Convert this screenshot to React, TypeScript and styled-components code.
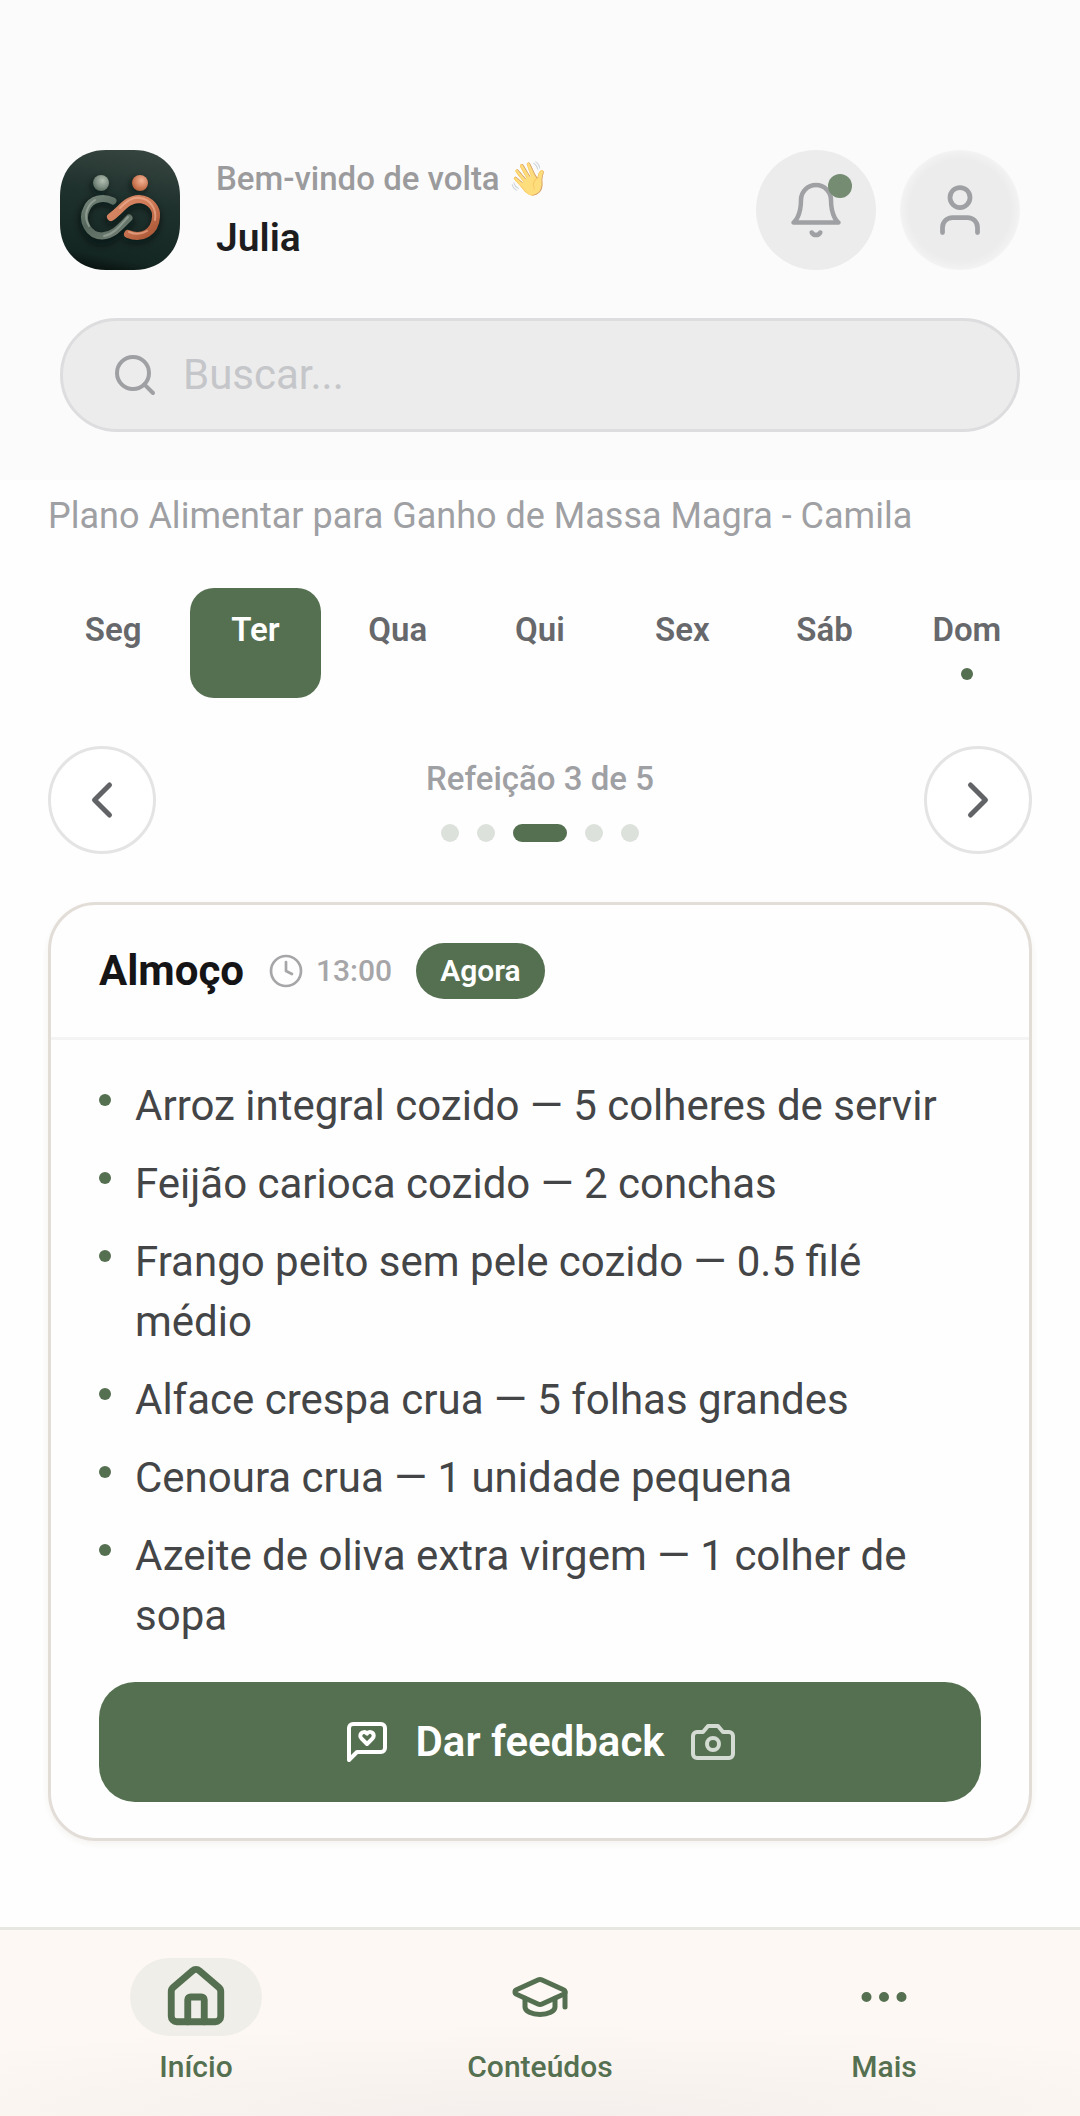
import React, { useState } from "react";
import styled, { createGlobalStyle } from "styled-components";

const color = {
  green: "#557050",
  surface: "#ececec",
  header: "#fbfbfb",
  muted: "#9fa0a3",
  nav: "#fdf8f3",
};

const GlobalStyle = createGlobalStyle`
  *, *::before, *::after { box-sizing: border-box; }
  body {
    margin: 0;
    background: #fefefe;
    font-family: Roboto, "Liberation Sans", sans-serif;
  }
  button { font: inherit; border: 0; padding: 0; cursor: pointer; }
  svg { display: block; flex: none; }
`;

const Page = styled.div`
  display: flex;
  flex-direction: column;
  min-height: 100vh;
`;

const Header = styled.header`
  display: flex;
  flex-direction: column;
  gap: 48px;
  padding: 150px 60px 48px;
  background: ${color.header};
`;

const Profile = styled.div`
  display: flex;
  align-items: center;
  gap: 24px;
`;

const Greeting = styled.div`
  flex: 1;
  display: flex;
  flex-direction: column;
  gap: 14px;
  padding-left: 12px;
`;

const Welcome = styled.span`
  display: flex;
  align-items: center;
  gap: 8px;
  font-size: 33px;
  line-height: 42px;
  font-weight: 500;
  color: #9b9b9d;
`;

const Emoji = styled.span`
  opacity: 0.6;
`;

const UserName = styled.strong`
  font-size: 39px;
  line-height: 48px;
  font-weight: 600;
  color: #1d1d1f;
`;

const RoundButton = styled.button<{ $soft?: boolean }>`
  position: relative;
  display: grid;
  place-items: center;
  width: 120px;
  height: 120px;
  border-radius: 50%;
  color: ${color.muted};
  background: ${(p) =>
    p.$soft
      ? "radial-gradient(circle closest-side, #ececec 84%, #f1f1f1 96%, #f4f4f4)"
      : color.surface};
`;

const Badge = styled.span`
  position: absolute;
  top: 24px;
  right: 24px;
  width: 24px;
  height: 24px;
  border-radius: 50%;
  background: #758b72;
`;

const SearchBox = styled.label`
  display: flex;
  align-items: center;
  gap: 24px;
  height: 114px;
  padding: 0 48px;
  border: 3px solid #dddddf;
  border-radius: 57px;
  background: ${color.surface};
  color: ${color.muted};
`;

const SearchInput = styled.input`
  flex: 1;
  min-width: 0;
  padding: 0;
  border: 0;
  outline: 0;
  background: transparent;
  font: inherit;
  font-size: 42px;
  line-height: 60px;
  color: #444547;
  &::placeholder { color: #c5c6c9; opacity: 1; }
`;

const Main = styled.main`
  flex: 1;
  display: flex;
  flex-direction: column;
  gap: 48px;
  padding: 12px 48px 84px;
`;

const PlanTitle = styled.h1`
  margin: 0;
  font-size: 36px;
  line-height: 48px;
  font-weight: 400;
  color: ${color.muted};
`;

const Days = styled.div`
  display: grid;
  grid-template-columns: repeat(7, 1fr);
  gap: 12px;
`;

const Day = styled.button<{ $active: boolean }>`
  display: flex;
  flex-direction: column;
  align-items: center;
  gap: 20px;
  padding: 24px 0 18px;
  border-radius: 24px;
  font-size: 33px;
  line-height: 36px;
  font-weight: 600;
  color: ${(p) => (p.$active ? "#fff" : "#67686b")};
  background: ${(p) => (p.$active ? color.green : "transparent")};
`;

const Dot = styled.span<{ $visible?: boolean }>`
  flex: none;
  width: 12px;
  height: 12px;
  border-radius: 50%;
  background: ${(p) => (p.$visible ? color.green : "transparent")};
`;

const MealPager = styled.div`
  display: flex;
  align-items: center;
  justify-content: space-between;
`;

const PagerButton = styled.button`
  display: grid;
  place-items: center;
  width: 108px;
  height: 108px;
  border: 3px solid #e4e4e5;
  border-radius: 50%;
  background: #fff;
  color: #626366;
`;

const PagerStatus = styled.div`
  display: flex;
  flex-direction: column;
  align-items: center;
  gap: 24px;
  font-size: 33px;
  line-height: 42px;
  font-weight: 500;
  color: ${color.muted};
`;

const Steps = styled.div`
  display: flex;
  gap: 18px;
`;

const Step = styled.span<{ $active: boolean }>`
  width: ${(p) => (p.$active ? 54 : 18)}px;
  height: 18px;
  border-radius: 9px;
  background: ${(p) => (p.$active ? color.green : "#dce1db")};
`;

const Card = styled.section`
  border: 3px solid #e3ddd8;
  border-radius: 48px;
  background: #fefefe;
  box-shadow: 0 3px 6px rgba(80, 60, 40, 0.06);
`;

const CardHeader = styled.div`
  display: flex;
  align-items: center;
  gap: 24px;
  padding: 36px 48px;
  border-bottom: 3px solid #f4f4f4;
`;

const MealName = styled.h2`
  margin: 0;
  font-size: 42px;
  line-height: 60px;
  font-weight: 700;
  color: #151517;
`;

const MealTime = styled.time`
  display: flex;
  align-items: center;
  gap: 12px;
  font-size: 30px;
  line-height: 36px;
  font-weight: 500;
  color: #a6a6a9;
`;

const NowTag = styled.span`
  padding: 10px 24px;
  border-radius: 28px;
  background: ${color.green};
  font-size: 30px;
  line-height: 36px;
  font-weight: 600;
  color: #fff;
`;

const CardBody = styled.div`
  display: flex;
  flex-direction: column;
  gap: 36px;
  padding: 36px 48px;
`;

const FoodList = styled.ul`
  display: flex;
  flex-direction: column;
  gap: 18px;
  margin: 0;
  padding: 0;
  list-style: none;
`;

const Food = styled.li`
  display: flex;
  gap: 24px;
  font-size: 42px;
  line-height: 60px;
  color: #444547;
  ${Dot} { margin-top: 18px; }
`;

const FeedbackButton = styled.button`
  display: flex;
  align-items: center;
  justify-content: center;
  gap: 24px;
  height: 120px;
  border-radius: 36px;
  background: ${color.green};
  font-size: 42px;
  line-height: 60px;
  font-weight: 600;
  color: #fff;
  svg:last-child { opacity: 0.75; }
`;

const TabBar = styled.nav`
  display: grid;
  grid-template-columns: repeat(3, 1fr);
  padding: 28px 24px 30px;
  border-top: 3px solid #e8e8e2;
  background:
    radial-gradient(ellipse 75% 50% at 50% 100%, #f4efec, rgba(244, 239, 236, 0)),
    ${color.nav};
`;

const Tab = styled.a`
  display: flex;
  flex-direction: column;
  align-items: center;
  gap: 12px;
  font-size: 30px;
  line-height: 38px;
  font-weight: 500;
  text-decoration: none;
  color: ${color.green};
`;

const TabIcon = styled.span<{ $active?: boolean }>`
  display: grid;
  place-items: center;
  width: 132px;
  height: 78px;
  border-radius: 39px;
  background: ${(p) => (p.$active ? "#f0eee9" : "transparent")};
`;

type IconProps = { size: number; weight?: number; children: React.ReactNode };

const Icon = ({ size, weight = 2, children }: IconProps) => (
  <svg
    width={size}
    height={size}
    viewBox="0 0 24 24"
    fill="none"
    stroke="currentColor"
    strokeWidth={weight}
    strokeLinecap="round"
    strokeLinejoin="round"
    aria-hidden="true"
  >
    {children}
  </svg>
);

const Logo = () => (
  <svg width="120" height="120" viewBox="0 0 120 120" role="img" aria-label="Logo">
    <defs>
      <linearGradient id="tile" x1="0.6" y1="0" x2="0.4" y2="1">
        <stop offset="0" stopColor="#36443f" />
        <stop offset="0.4" stopColor="#1f312d" />
        <stop offset="0.9" stopColor="#142622" />
        <stop offset="1" stopColor="#0a1512" />
      </linearGradient>
      <linearGradient id="sage" x1="0" y1="0" x2="0.7" y2="1">
        <stop offset="0" stopColor="#75857a" />
        <stop offset="0.5" stopColor="#56675d" />
        <stop offset="1" stopColor="#6d7b70" />
      </linearGradient>
      <linearGradient id="copper" x1="0" y1="0" x2="1" y2="1">
        <stop offset="0" stopColor="#d98a68" />
        <stop offset="0.5" stopColor="#cf7a57" />
        <stop offset="1" stopColor="#a85534" />
      </linearGradient>
      <radialGradient id="sageBall" cx="0.6" cy="0.35" r="0.7">
        <stop offset="0" stopColor="#b3bfb2" />
        <stop offset="0.6" stopColor="#7f8f83" />
        <stop offset="1" stopColor="#55665b" />
      </radialGradient>
      <radialGradient id="copperBall" cx="0.6" cy="0.35" r="0.7">
        <stop offset="0" stopColor="#f2b496" />
        <stop offset="0.6" stopColor="#d27f5b" />
        <stop offset="1" stopColor="#b05c38" />
      </radialGradient>
      <filter id="soft" x="-20%" y="-20%" width="140%" height="140%">
        <feGaussianBlur stdDeviation="3" />
      </filter>
    </defs>
    <path
      d="M46 0H74C101 0 120 19 120 46V74C120 101 101 120 74 120H46C19 120 0 101 0 74V46C0 19 19 0 46 0Z"
      fill="url(#tile)"
    />
    <g fill="none" stroke="#06110e" strokeWidth="8" strokeLinecap="round" opacity="0.65" filter="url(#soft)">
      <path d="M53 54C43 48 30 51 25 61C20 76 29 91 42 91C54 90 60 81 70 72" />
      <path d="M50 71C60 64 67 53 79 53C91 54 97 62 96 72C94 86 82 92 68 88" />
      <circle cx="39" cy="36" r="4" />
      <circle cx="78" cy="36" r="4" />
    </g>
    <circle cx="41" cy="33" r="8" fill="url(#sageBall)" />
    <circle cx="80" cy="33" r="8" fill="url(#copperBall)" />
    <g fill="none" strokeLinecap="round">
      <path d="M53 51C43 46 31 49 27 58C20 71 29 86 42 86C54 85 60 77 69 68" stroke="url(#sage)" strokeWidth="7" />
      <path d="M35 50C27 55 23 66 29 76M44 86C54 84 60 76 68 67" stroke="#a7b3a8" strokeWidth="2" opacity="0.6" />
      <path d="M51 67C61 60 67 49 79 49C91 50 97 59 96 67C95 82 82 90 68 84" stroke="url(#copper)" strokeWidth="8" />
      <path d="M60 58C67 51 72 47 80 48C90 49 97 59 95 70M69 82C76 85 82 84 87 81" stroke="#f3b799" strokeWidth="2" opacity="0.6" />
    </g>
  </svg>
);

const days = ["Seg", "Ter", "Qua", "Qui", "Sex", "Sáb", "Dom"];
const today = "Dom";
const mealCount = 5;

const foods = [
  "Arroz integral cozido — 5 colheres de servir",
  "Feijão carioca cozido — 2 conchas",
  "Frango peito sem pele cozido — 0.5 filé médio",
  "Alface crespa crua — 5 folhas grandes",
  "Cenoura crua — 1 unidade pequena",
  "Azeite de oliva extra virgem — 1 colher de sopa",
];

export default function App() {
  const [day, setDay] = useState("Ter");
  const [meal, setMeal] = useState(3);

  return (
    <Page>
      <GlobalStyle />
      <Header>
        <Profile>
          <Logo />
          <Greeting>
            <Welcome>
              Bem-vindo de volta <Emoji>👋</Emoji>
            </Welcome>
            <UserName>Julia</UserName>
          </Greeting>
          <RoundButton type="button" aria-label="Notificações">
            <Icon size={60} weight={1.8}>
              <path d="M18 8A6 6 0 0 0 6 8c0 7-3 9-3 9h18s-3-2-3-9" />
              <path d="M13.73 21a2 2 0 0 1-3.46 0" />
            </Icon>
            <Badge />
          </RoundButton>
          <RoundButton type="button" aria-label="Perfil" $soft>
            <Icon size={60} weight={1.9}>
              <path d="M19 21v-2a4 4 0 0 0-4-4H9a4 4 0 0 0-4 4v2" />
              <circle cx="12" cy="7" r="4" />
            </Icon>
          </RoundButton>
        </Profile>
        <SearchBox>
          <Icon size={48}>
            <circle cx="11" cy="11" r="8" />
            <path d="m21 21-4.35-4.35" />
          </Icon>
          <SearchInput type="search" placeholder="Buscar..." aria-label="Buscar" />
        </SearchBox>
      </Header>

      <Main>
        <PlanTitle>Plano Alimentar para Ganho de Massa Magra - Camila</PlanTitle>
        <Days>
          {days.map((d) => (
            <Day key={d} type="button" $active={d === day} aria-pressed={d === day} onClick={() => setDay(d)}>
              {d}
              <Dot $visible={d === today} />
            </Day>
          ))}
        </Days>
        <MealPager>
          <PagerButton type="button" aria-label="Refeição anterior" onClick={() => setMeal(Math.max(1, meal - 1))}>
            <Icon size={60}>
              <path d="m15 18-6-6 6-6" />
            </Icon>
          </PagerButton>
          <PagerStatus>
            <span>{`Refeição ${meal} de ${mealCount}`}</span>
            <Steps>
              {Array.from({ length: mealCount }, (_, i) => (
                <Step key={i} $active={i + 1 === meal} />
              ))}
            </Steps>
          </PagerStatus>
          <PagerButton type="button" aria-label="Próxima refeição" onClick={() => setMeal(Math.min(mealCount, meal + 1))}>
            <Icon size={60}>
              <path d="m9 18 6-6-6-6" />
            </Icon>
          </PagerButton>
        </MealPager>
        <Card>
          <CardHeader>
            <MealName>Almoço</MealName>
            <MealTime>
              <Icon size={36} weight={1.8}>
                <circle cx="12" cy="12" r="10" />
                <path d="M12 6v6l4 2" />
              </Icon>
              13:00
            </MealTime>
            <NowTag>Agora</NowTag>
          </CardHeader>
          <CardBody>
            <FoodList>
              {foods.map((food) => (
                <Food key={food}>
                  <Dot $visible />
                  <span>{food}</span>
                </Food>
              ))}
            </FoodList>
            <FeedbackButton type="button">
              <Icon size={48}>
                <path d="M21 15a2 2 0 0 1-2 2H7l-4 4V5a2 2 0 0 1 2-2h14a2 2 0 0 1 2 2z" />
                <path d="M14.8 7.5a1.84 1.84 0 0 0-2.6 0l-.2.3-.3-.3a1.84 1.84 0 1 0-2.4 2.8L12 13l2.7-2.7c.9-.9.8-2.1.1-2.8" />
              </Icon>
              Dar feedback
              <Icon size={48}>
                <path d="M14.5 4h-5L7 7H4a2 2 0 0 0-2 2v9a2 2 0 0 0 2 2h16a2 2 0 0 0 2-2V9a2 2 0 0 0-2-2h-3z" />
                <circle cx="12" cy="13" r="3" />
              </Icon>
            </FeedbackButton>
          </CardBody>
        </Card>
      </Main>

      <TabBar>
        <Tab href="#inicio" aria-current="page">
          <TabIcon $active>
            <Icon size={66} weight={2.5}>
              <path d="M15 21v-8a1 1 0 0 0-1-1h-4a1 1 0 0 0-1 1v8" />
              <path d="M3 10a2 2 0 0 1 .709-1.528l7-6a2 2 0 0 1 2.582 0l7 6A2 2 0 0 1 21 10v9a2 2 0 0 1-2 2H5a2 2 0 0 1-2-2z" />
            </Icon>
          </TabIcon>
          Início
        </Tab>
        <Tab href="#conteudos">
          <TabIcon>
            <Icon size={60}>
              <path d="M21.42 10.922a1 1 0 0 0-.019-1.838L12.83 5.18a2 2 0 0 0-1.66 0L2.6 9.08a1 1 0 0 0 0 1.832l8.57 3.908a2 2 0 0 0 1.66 0z" />
              <path d="M22 10v6" />
              <path d="M6 12.5V16a6 3 0 0 0 12 0v-3.5" />
            </Icon>
          </TabIcon>
          Conteúdos
        </Tab>
        <Tab href="#mais">
          <TabIcon>
            <Icon size={60}>
              <circle cx="12" cy="12" r="1" />
              <circle cx="19" cy="12" r="1" />
              <circle cx="5" cy="12" r="1" />
            </Icon>
          </TabIcon>
          Mais
        </Tab>
      </TabBar>
    </Page>
  );
}
